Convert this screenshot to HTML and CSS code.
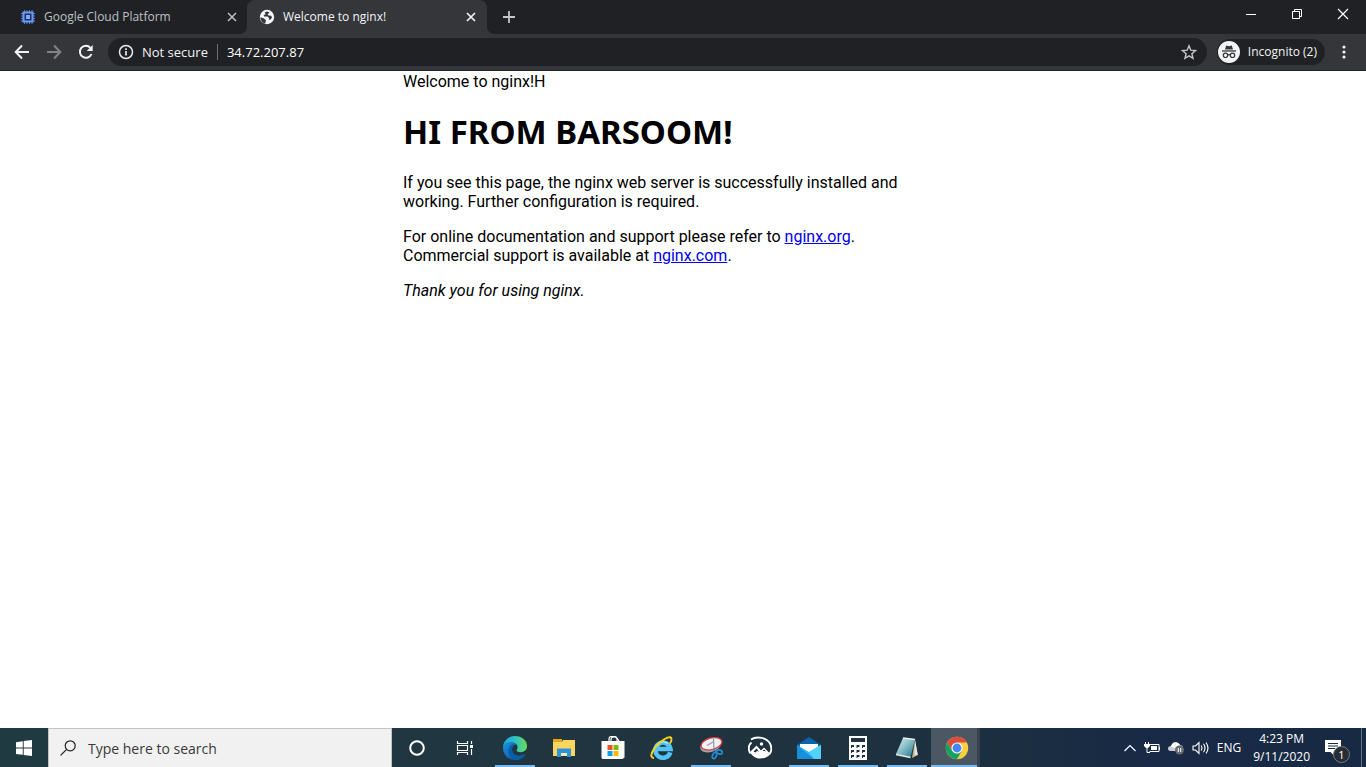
FILE: index.html
```html
<!DOCTYPE html>
<html lang="en">
<head>
<meta charset="utf-8">
<title>Welcome to nginx!</title>
<link rel="stylesheet" href="styles.css">
</head>
<body>
<div class="screen">
  <header class="browser">
    <div class="tab-strip">
      <div class="tab">
        <svg class="favicon" viewBox="0 0 16 16" width="16" height="16"><path d="M4.500 1v14M7 1v14M9.500 1v14M12 1v14M1 4.500h14M1 7h14M1 9.500h14M1 12h14" stroke="#4e7fe0" stroke-width="1"/><rect x="2.500" y="2.500" width="11" height="11" fill="#6b9bf7"/><rect x="4.500" y="4.500" width="7" height="7" fill="#20345f"/><rect x="6" y="6" width="4" height="4" fill="#80a9fa"/></svg>
        <span class="tab-title">Google Cloud Platform</span>
        <button class="tab-close" aria-label="Close tab"><svg viewBox="0 0 10 10" width="10" height="10"><path d="M1 1l8 8M9 1L1 9" stroke="currentColor" stroke-width="1.500"/></svg></button>
      </div>
      <div class="tab active">
        <svg class="favicon" viewBox="0 0 16 16" width="16" height="16"><circle cx="8" cy="8" r="7.200" fill="#f4f5f6"/><path d="M8 2.500L5.500 3.400 6.800 5 4.600 6.200 5.200 7.600H8.600L10.200 9.200 9.600 10.800 11.600 10.600 13 8.400 12.200 6.800 9.600 6.400 8.600 5.200 10.600 3.400ZM1.300 8.200L4.600 9.200 7 11.200 6.200 14.600C3.500 14 1.600 11.600 1.300 8.200Z" fill="#35363a"/></svg>
        <span class="tab-title">Welcome to nginx!</span>
        <button class="tab-close" aria-label="Close tab"><svg viewBox="0 0 10 10" width="10" height="10"><path d="M1 1l8 8M9 1L1 9" stroke="currentColor" stroke-width="1.700"/></svg></button>
      </div>
      <button class="new-tab" aria-label="New tab"><svg viewBox="0 0 12 12" width="12" height="12"><path d="M6 0v12M0 6h12" stroke="#c4c7ca" stroke-width="1.800"/></svg></button>
      <div class="window-buttons">
        <button aria-label="Minimize"><svg viewBox="0 0 12 12" width="12" height="12"><path d="M1 6.500h10" stroke="#fff"/></svg></button>
        <button aria-label="Restore"><svg viewBox="0 0 12 12" width="12" height="12"><path d="M1.500 3.500h7v7h-7zM3.500 3V1.500h7v7H9" fill="none" stroke="#fff"/></svg></button>
        <button aria-label="Close"><svg viewBox="0 0 12 12" width="12" height="12"><path d="M1 1l10 10M11 1L1 11" stroke="#fff" stroke-width="1.200"/></svg></button>
      </div>
    </div>
    <div class="toolbar">
      <button class="nav" aria-label="Back"><svg viewBox="0 0 16 16" width="16" height="16"><path d="M15 8H2M8 1.500L1.700 8 8 14.500" fill="none" stroke="#f1f3f4" stroke-width="2"/></svg></button>
      <button class="nav" aria-label="Forward"><svg viewBox="0 0 16 16" width="16" height="16"><path d="M1 8h13M8 1.500L14.300 8 8 14.500" fill="none" stroke="#818387" stroke-width="2"/></svg></button>
      <button class="nav" aria-label="Reload"><svg viewBox="0 0 16 16" width="16" height="16"><path d="M13.500 10A6 6 0 1 1 12.400 3.800" fill="none" stroke="#f1f3f4" stroke-width="2"/><path d="M14.700 1v6H8.700z" fill="#f1f3f4"/></svg></button>
      <div class="omnibox">
        <svg viewBox="0 0 16 16" width="16" height="16"><circle cx="8" cy="8" r="6.500" fill="none" stroke="#e8eaed" stroke-width="1.500"/><path d="M8 7v4.500M8 4.200v1.800" stroke="#e8eaed" stroke-width="1.700"/></svg>
        <label class="security" for="address">Not secure</label>
        <input id="address" class="address" type="text" value="34.72.207.87">
        <button class="star" aria-label="Bookmark this tab"><svg viewBox="0 0 16 16" width="16" height="16"><path d="M8 1.800l1.800 4.400 4.700.4-3.600 3.100 1.100 4.600L8 11.800l-4 2.500 1.100-4.600-3.600-3.100 4.700-.4z" fill="none" stroke="#c4c7ca" stroke-width="1.400"/></svg></button>
      </div>
      <button class="incognito">
        <svg viewBox="0 0 22 22" width="22" height="22"><circle cx="11" cy="11" r="11" fill="#f1f3f4"/><path d="M7 8.500L8.200 4.500 11 5.200 13.800 4.500 15 8.500z" fill="#35363a"/><path d="M4 10h14" stroke="#35363a" stroke-width="1.300"/><circle cx="7.500" cy="14.300" r="2.200" fill="none" stroke="#35363a" stroke-width="1.200"/><circle cx="14.500" cy="14.300" r="2.200" fill="none" stroke="#35363a" stroke-width="1.200"/><path d="M9.700 14q1.300-.8 2.600 0" fill="none" stroke="#35363a" stroke-width="1.200"/></svg>
        <span>Incognito (2)</span>
      </button>
      <button class="menu" aria-label="Menu"><svg viewBox="0 0 4 14" width="4" height="14"><g fill="#f1f3f4"><circle cx="2" cy="2" r="1.600"/><circle cx="2" cy="7" r="1.600"/><circle cx="2" cy="12" r="1.600"/></g></svg></button>
    </div>
  </header>

  <main class="page">
    <div class="article">
      Welcome to nginx!H
      <h1>HI FROM BARSOOM!</h1>
      <p>If you see this page, the nginx web server is successfully installed and<br>working. Further configuration is required.</p>
      <p>For online documentation and support please refer to <a href="#org">nginx.org</a>.<br>Commercial support is available at <a href="#com">nginx.com</a>.</p>
      <p><em>Thank you for using nginx.</em></p>
    </div>
  </main>

  <footer class="taskbar">
    <button class="start" aria-label="Start"><svg viewBox="0 0 16 16" width="16" height="16"><path d="M0 2.200L6.800 1.200V7.600H0zM7.700 1.100L16 0V7.600H7.700zM0 8.500H6.800V14.800L0 13.900zM7.700 8.500H16V16L7.700 14.900z" fill="#fff"/></svg></button>
    <div class="search">
      <svg viewBox="0 0 16 16" width="16" height="16"><circle cx="10.200" cy="5.800" r="5" fill="none" stroke="#222" stroke-width="1.200"/><path d="M6.600 9.400L.6 15.400" stroke="#222" stroke-width="1.300"/></svg>
      <input type="text" placeholder="Type here to search" aria-label="Type here to search">
    </div>
    <nav class="apps">
      <button class="app cortana" aria-label="Cortana"><svg viewBox="0 0 24 24" width="24" height="24"><circle cx="12" cy="12" r="6.800" fill="none" stroke="#fff" stroke-width="2"/></svg></button>
      <button class="app" aria-label="Task View"><svg viewBox="0 0 24 24" width="24" height="24"><path d="M4.500 5v2.500h10V5M4.500 19v-2.500h10V19M4.500 9.500h10v5h-10zM18.500 5v3M18.500 13v6" fill="none" stroke="#fff" stroke-width="1.200"/><path d="M17 9h3v3h-3z" fill="#fff"/></svg></button>
      <button class="app open" aria-label="Edge"><svg viewBox="0 0 24 24" width="24" height="24"><defs><linearGradient id="edge-top"><stop stop-color="#1fa4e4"/><stop offset=".5" stop-color="#2cc2c8"/><stop offset="1" stop-color="#69de51"/></linearGradient><linearGradient id="edge-low" x2="1" y2="1"><stop stop-color="#1d91dd"/><stop offset="1" stop-color="#0b4b94"/></linearGradient></defs><path d="M0 12C0 5 5.500 0 12 0c7 0 12 4.500 12 10 0 4-3 6.200-6.200 6.200-2.800 0-4.200-1-4.200-2 0-.8 1-1.200 1-3C14.600 8.500 12 6.500 8.500 6.500 4 6.500.5 9 0 12z" fill="url(#edge-top)"/><path d="M0 12c0-3.500 3.800-5.800 8.500-5.500 2 .1 3.600.8 4.500 1.900-3 .2-4 2.700-4 5.100 0 5 5.500 7.500 10.500 5.500 1.500-.6 2.600-1.100 2.500-.3C20 22 16 24 12 24 5 24 0 18.500 0 12z" fill="url(#edge-low)"/><path d="M13 8.400c-5-1.200-8.400 3.100-7.300 8C6.500 20 9.400 23 13 24c4 0 7.500-2.400 9-5.300-6.500 3.700-13-.2-13-5.200 0-2.300 1.400-4.600 4-5.100z" fill="#075fac"/></svg></button>
      <button class="app" aria-label="File Explorer"><svg viewBox="0 0 24 24" width="24" height="24"><path d="M1 3h9v3H1z" fill="#e7a817"/><path d="M1 6h9l1-2h12v16H1z" fill="#ffd65d"/><path d="M5 12.500h14V21h-4v-4H9v4H5z" fill="#2e93df"/><path d="M9 17h6v3H9z" fill="#ffe9a4"/></svg></button>
      <button class="app" aria-label="Microsoft Store"><svg viewBox="0 0 24 24" width="24" height="24"><path d="M8 5V3q0-2.500 2.500-2.500h3Q16 .5 16 3v2M10 5V3.500Q10 1 13 1t5 4" fill="none" stroke="#fff" stroke-width="1.200"/><path d="M.5 5h23v16.500L21.500 23h-20l-1-1z" fill="#fff"/><path d="M6.500 9H11.500v5h-5z" fill="#f25022"/><path d="M12.500 9h5v5h-5z" fill="#7fba00"/><path d="M6.500 15H11.500v5h-5z" fill="#00a4ef"/><path d="M12.500 15h5v5h-5z" fill="#ffb900"/></svg></button>
      <button class="app" aria-label="Internet Explorer"><svg viewBox="0 0 24 24" width="24" height="24"><path d="M20.300 16.300A7.600 7.600 0 1 1 20.500 13H7.500" fill="none" stroke="#53c3f5" stroke-width="4.600"/><path d="M7 8.500q5-5 11-1" fill="none" stroke="#bceaff" stroke-width="1.200"/><path d="M4 22C-2 22 3 12 10 6.500 15 2 21-.5 21.500 2.500 21.800 4 21 6 20 7.500" fill="none" stroke="#ffd31c" stroke-width="1.900"/></svg></button>
      <button class="app open" aria-label="Snipping Tool"><svg viewBox="0 0 24 24" width="24" height="24"><ellipse cx="11.500" cy="10" rx="10.500" ry="6" transform="rotate(-15 11.500 10)" fill="#9da7ab"/><ellipse cx="12.500" cy="7.800" rx="10.600" ry="5.800" transform="rotate(-15 12.500 7.800)" fill="#eef0f1" stroke="#df3b42" stroke-width="1.300"/><path d="M8 9.500l7-4M14.500 3l.5 10" stroke="#909da2" stroke-width="1.200"/><g fill="none" stroke="#268bd2" stroke-width="1.700"><ellipse cx="15.500" cy="19.500" rx="1.900" ry="3.200" transform="rotate(25 15.500 19.500)"/><ellipse cx="20.500" cy="16" rx="3" ry="1.900" transform="rotate(15 20.500 16)"/><path d="M14.800 13l3 3.500"/></g></svg></button>
      <button class="app" aria-label="Photo viewer"><svg viewBox="0 0 24 24" width="24" height="24"><path d="M3 3.500C9-.5 19 2 22 7.500c2 4 1.500 8-.5 10.500M3.500 6.500C0 9 0 14 2.500 17.500" fill="none" stroke="#fff" stroke-width="1.900"/><path d="M2 16L8.500 9.500 13 14.500 16 11.500 22.500 18C20 21 16.500 22.500 12 22.500 7.500 22.500 4 20 2 16z" fill="#fff"/><path d="M5.500 15.500l3-3 2.500 3-2-.5-1.500 1.500zM14.500 15l1.700-1.500 1.800 2-1.800-.5z" fill="#20343f"/><circle cx="13.500" cy="8" r="1.700" fill="#fff"/></svg></button>
      <button class="app open" aria-label="Mail"><svg viewBox="0 0 24 24" width="24" height="24"><path d="M0 9L12 1l12 8v3H0z" fill="#0963ae"/><path d="M3 8h18v8H3z" fill="#fff"/><path d="M0 9l12 7L24 9v14H0z" fill="#35b8ef"/><path d="M0 9l17 14H0z" fill="#1490df"/><path d="M24 9v14h-7L12 16z" fill="#50d2fa"/></svg></button>
      <button class="app open" aria-label="Calculator"><svg viewBox="0 0 24 24" width="24" height="24"><path d="M3 0h18v24H3z" fill="#fff"/><path d="M5 2h14v4H5z" fill="#1f3240"/><path d="M5 9h3v2H6v1H5zM10.500 9h3v2h-2v1h-1zM16 9h3v2h-2v1h-1zM5 14h3v2H6v1H5zM10.500 14h3v2h-2v1h-1zM16 14h3v2h-2v1h-1zM5 19h3v2H6v1H5zM10.500 19h3v2h-2v1h-1zM16 19h3v2h-2v1h-1z" fill="#1f3240"/></svg></button>
      <button class="app open" aria-label="Notepad"><svg viewBox="0 0 24 24" width="24" height="24"><defs><linearGradient id="note" x2="1" y2="1"><stop stop-color="#dff2f4"/><stop offset=".5" stop-color="#7fb9c4"/><stop offset="1" stop-color="#1f6f86"/></linearGradient></defs><path d="M20 4l-3 18 6-3z" fill="#c9b48c"/><path d="M8 2l12 1.500-4.500 18L1 18z" fill="url(#note)"/><path d="M8 2l12 1.500M1 18.500l14.500 3" fill="none" stroke="#e7eeee" stroke-width="1.500"/><path d="M20 3.500l2.500 15-3 1z" fill="#e3e8e8"/></svg></button>
      <button class="app current" aria-label="Chrome"><svg viewBox="0 0 24 24" width="24" height="24"><circle cx="12" cy="12" r="11.200" fill="#ffcd40"/><path d="M2.300 6.400A11.200 11.200 0 0 1 21.700 6.400H12L7.100 14.800z" fill="#df4b3d"/><path d="M2.300 6.400A11.200 11.200 0 0 0 12 23.200L16.900 14.800 12 17.500 7.100 14.800z" fill="#17a160"/><circle cx="12" cy="12" r="5.600" fill="#f4f4f4"/><circle cx="12" cy="12" r="4.400" fill="#4587f4"/></svg></button>
    </nav>
    <div class="tray">
      <button aria-label="Show hidden icons"><svg viewBox="0 0 12 8" width="12" height="8"><path d="M.5 7L6 1.500 11.500 7" fill="none" stroke="#fff" stroke-width="1.200"/></svg></button>
      <svg viewBox="0 0 16 12" width="16" height="12"><path d="M5 2.500h10v7H5.500M15.500 5v3M1.500 0v2M4.500 0v2M3 6v4.500h3" fill="none" stroke="#fff"/><path d="M0 2h6v2L4 6H2L0 4zM7 4h6v4H7z" fill="#fff"/></svg>
      <svg viewBox="0 0 16 14" width="16" height="14"><path d="M3 10Q0 10 0 7.500T3 5Q5 0 9 1.500 11 2 12 4 15 4 15 8v2z" fill="#c8cdd2"/><path d="M3 5Q5 0 9 1.500 11 2 12 4L6 7z" fill="#fff"/><circle cx="11.500" cy="9" r="4.500" fill="#686b70"/><path d="M10.300 7v4M12.700 7v4" stroke="#fff"/></svg>
      <svg viewBox="0 0 17 14" width="17" height="14"><path d="M1 5h2.500L7 1.500v11L3.500 9H1zM9 4.500q2 2.500 0 5M11.500 2.800q3 4.200 0 8.400M14 1.500q4 5.500 0 11" fill="none" stroke="#fff" stroke-width="1.100"/></svg>
      <span class="lang">ENG</span>
      <button class="clock"><span>4:23 PM</span><span>9/11/2020</span></button>
      <button class="notices" aria-label="Notifications"><svg viewBox="0 0 17 16" width="17" height="16"><path d="M0 0h16v12H9v3.500L5.500 12H0z" fill="#fff"/><path d="M3 3.500h10M3 6h10M3 8.500h7" stroke="#1a2b42"/></svg><span class="badge">1</span></button>
    </div>
  </footer>
</div>
</body>
</html>
```
FILE: styles.css
```css
* { box-sizing: border-box; }
body { margin: 0; background: #fff; }
button { display: flex; align-items: center; justify-content: center; margin: 0; padding: 0; border: 0; background: none; color: inherit; font: inherit; }
input { min-width: 0; padding: 0; border: 0; outline: 0; background: none; color: inherit; font: inherit; }
svg { display: block; flex: none; }
.screen { display: flex; flex-direction: column; min-height: 100vh; font-family: "Open Sans", "Noto Sans", sans-serif; }

.browser { background: #35363a; border-bottom: 1px solid #242122; color: #f1f3f4; }
.tab-strip { display: flex; height: 34px; background: #202124; }
.tab { position: relative; display: flex; align-items: center; flex: 0 1 240px; padding: 0 11px 0 12px; color: #bdc1c6; font-size: 12px; }
.tab:first-child { flex-basis: 247px; padding: 0 10px 0 20px; }
.tab-title { flex: 1; margin-left: 8px; padding-bottom: 1px; white-space: nowrap; }
.tab-close { width: 10px; height: 16px; }
.tab.active { background: #35363a; border-radius: 8px 8px 0 0; color: #f1f3f4; }
.tab.active::before, .tab.active::after { content: ""; position: absolute; bottom: 0; width: 8px; height: 8px; }
.tab.active::before { left: -8px; background: radial-gradient(circle at 0 0, #202124 8px, #35363a 8px); }
.tab.active::after { right: -8px; background: radial-gradient(circle at 100% 0, #202124 8px, #35363a 8px); }
.new-tab { width: 44px; }
.window-buttons { display: flex; margin-left: auto; }
.window-buttons button { width: 46px; height: 28px; }

.toolbar { display: flex; align-items: center; height: 36px; padding: 0 6px; }
.nav { width: 32px; height: 28px; }
.omnibox { display: flex; align-items: center; flex: 1; height: 28px; margin-left: 6px; padding: 0 10px; border-radius: 14px; background: #202124; font-size: 13px; }
.security { margin-left: 8px; padding-right: 9px; border-right: 1px solid #6b6d70; line-height: 16px; }
.address { flex: 1; margin-left: 9px; color: #fff; }
.incognito { gap: 8px; height: 26px; margin-left: 10px; padding: 0 8px 0 1px; border-radius: 13px; background: #202124; font-size: 12px; }
.incognito span { padding-bottom: 1px; }
.menu { width: 32px; height: 28px; margin-left: 3px; }

.page { flex: 1; }
.article { width: 560px; max-width: 100%; margin: 0 auto; padding-top: 1px; color: #000; font: 16px/19px Roboto, "Noto Sans", sans-serif; }
.article h1 { margin: 21px 0 22px; font: bold 33px/39px "Noto Sans", sans-serif; }
.article p { margin: 16px 0; }
.article a { color: #0000ee; }

.taskbar { display: flex; height: 39px; background: linear-gradient(90deg, #203a42, #20343f 50%, #1d3040 70%, #182a45 84%, #182944); color: #fff; }
.start { width: 48px; }
.search { display: flex; align-items: center; gap: 12px; flex: 0 1 344px; padding: 0 11px; border: 1px solid #c3c3c3; border-bottom: 0; background: #f1f1f1; font-size: 14px; }
.search input { flex: 1; }
.search input::placeholder { color: #3a3a3a; opacity: 1; }
.apps { display: flex; }
.app { width: 49px; border: solid transparent; border-width: 0 4px 0 5px; }
.app.cortana { width: 48px; }
.app:nth-child(2) { margin-right: 1px; }
.app.open { background: linear-gradient(#76b9ed, #76b9ed) bottom / 100% 2px no-repeat; background-clip: padding-box; }
.app.current { background: linear-gradient(#76b9ed, #76b9ed) bottom / 100% 2px no-repeat border-box, #4b5863; border-right: 3px solid #36434f; }
.tray { display: flex; align-items: center; gap: 8px; margin-left: auto; padding-right: 4px; font-size: 12px; }
.clock { flex-direction: column; margin-left: 4px; line-height: 18px; }
.notices { position: relative; width: 44px; height: 39px; border-right: 1px solid #64707f; padding-right: 13px; }
.badge { position: absolute; right: 11px; bottom: 4px; width: 17px; height: 17px; border: 1px solid #777b80; border-radius: 50%; background: #292d33; font-size: 11px; line-height: 15px; text-align: center; }
```
